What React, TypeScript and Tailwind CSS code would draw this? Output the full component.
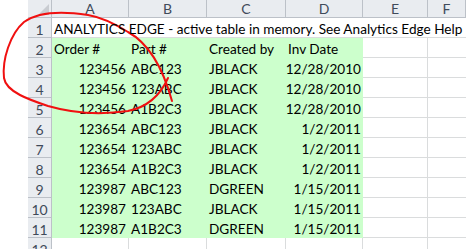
const cols = ["A", "B", "C", "D", "E", "F"];

type Row = [string, string, string, string];

const rows: Row[] = [
  ["Order #", "Part #", "Created by", "Inv Date"],
  ["123456", "ABC123", "JBLACK", "12/28/2010"],
  ["123456", "123ABC", "JBLACK", "12/28/2010"],
  ["123456", "A1B2C3", "JBLACK", "12/28/2010"],
  ["123654", "ABC123", "JBLACK", "1/2/2011"],
  ["123654", "123ABC", "JBLACK", "1/2/2011"],
  ["123654", "A1B2C3", "JBLACK", "1/2/2011"],
  ["123987", "ABC123", "DGREEN", "1/15/2011"],
  ["123987", "123ABC", "JBLACK", "1/15/2011"],
  ["123987", "A1B2C3", "DGREEN", "1/15/2011"],
];

const font = { fontFamily: "Lato, 'Open Sans', sans-serif" };

const RowHead = ({ n }: { n: number }) => (
  <div className="flex items-center justify-center pt-[3px] bg-[#e9ecf0] border-r border-b border-[#bcc1c8] text-[14px] text-[#3f4a5a]">
    {n}
  </div>
);

const Blank = ({ last, noBottom }: { last?: boolean; noBottom?: boolean }) => (
  <div
    className={`bg-white border-[#dadcdd] ${last ? "" : "border-r"} ${
      noBottom ? "" : "border-b"
    }`}
  />
);

const App = () => {
  return (
    <div
      className="relative w-[466px] h-[249px] overflow-hidden bg-white text-[13.6px] text-black"
      style={font}
    >
      <div className="grid grid-cols-[28px_24px_77px_78px_79px_77px_65px_1fr] grid-rows-[18px_repeat(12,20px)]">
        {/* header row */}
        <div className="bg-white" />
        <div className="relative bg-[#e9ecf0] border-r border-b border-[#bcc1c8]">
          <svg
            className="absolute right-[2px] bottom-[2px]"
            width="11"
            height="11"
            viewBox="0 0 11 11"
          >
            <polygon points="11,0 11,11 0,11" fill="#c9ccd1" />
          </svg>
        </div>
        {cols.map((c) => (
          <div
            key={c}
            className="flex items-center justify-center bg-[#e9ecf0] border-r border-b border-[#bcc1c8] text-[14px] text-[#3f4a5a]"
          >
            {c}
          </div>
        ))}

        {/* row 1 */}
        <div className="bg-white" />
        <RowHead n={1} />
        <div className="relative z-10 flex items-center pt-[3px] pl-[2px] border-b border-[#dadcdd] whitespace-nowrap">
          ANALYTICS EDGE - active table in memory. See Analytics Edge Help
        </div>
        <div className="border-b border-[#dadcdd]" />
        <div className="border-b border-[#dadcdd]" />
        <div className="border-b border-[#dadcdd]" />
        <div className="border-b border-[#dadcdd]" />
        <div className="border-b border-[#dadcdd]" />

        {/* data rows */}
        {rows.map((r, i) => (
          <Rowx key={i} n={i + 2} r={r} header={i === 0} />
        ))}

        {/* row 12 */}
        <div className="bg-white" />
        <RowHead n={12} />
        <Blank noBottom />
        <Blank noBottom />
        <Blank noBottom />
        <Blank noBottom />
        <Blank noBottom />
        <Blank noBottom last />
      </div>

      <svg
        className="absolute left-0 top-0 pointer-events-none"
        width="466"
        height="249"
        viewBox="0 0 466 249"
      >
        <path
          d="M 172 101 C 164 72, 150 44, 128 32 C 112 22, 100 17, 88 15 C 62 11, 38 12, 24 22 C 10 34, 2 60, 4 78 C 6 92, 30 100, 48 106 C 72 113, 100 115, 128 111 C 148 107, 160 96, 168 78"
          fill="none"
          stroke="#f01010"
          strokeWidth="2"
          strokeLinecap="round"
        />
      </svg>
    </div>
  );
};

const Rowx = ({ n, r, header }: { n: number; r: Row; header: boolean }) => (
  <>
    <div className="bg-white" />
    <RowHead n={n} />
    <div
      className={`flex items-center pt-[3px] bg-[#ccffcc] ${
        header ? "pl-[2px]" : "justify-end pr-[3px]"
      }`}
    >
      {r[0]}
    </div>
    <div className="flex items-center pt-[3px] bg-[#ccffcc] pl-[2px]">{r[1]}</div>
    <div className="flex items-center pt-[3px] bg-[#ccffcc] pl-[2px]">{r[2]}</div>
    <div
      className={`flex items-center pt-[3px] bg-[#ccffcc] ${
        header ? "pl-[2px]" : "justify-end pr-[2px]"
      }`}
    >
      {r[3]}
    </div>
    <Blank />
    <Blank last />
  </>
);

export default App;
